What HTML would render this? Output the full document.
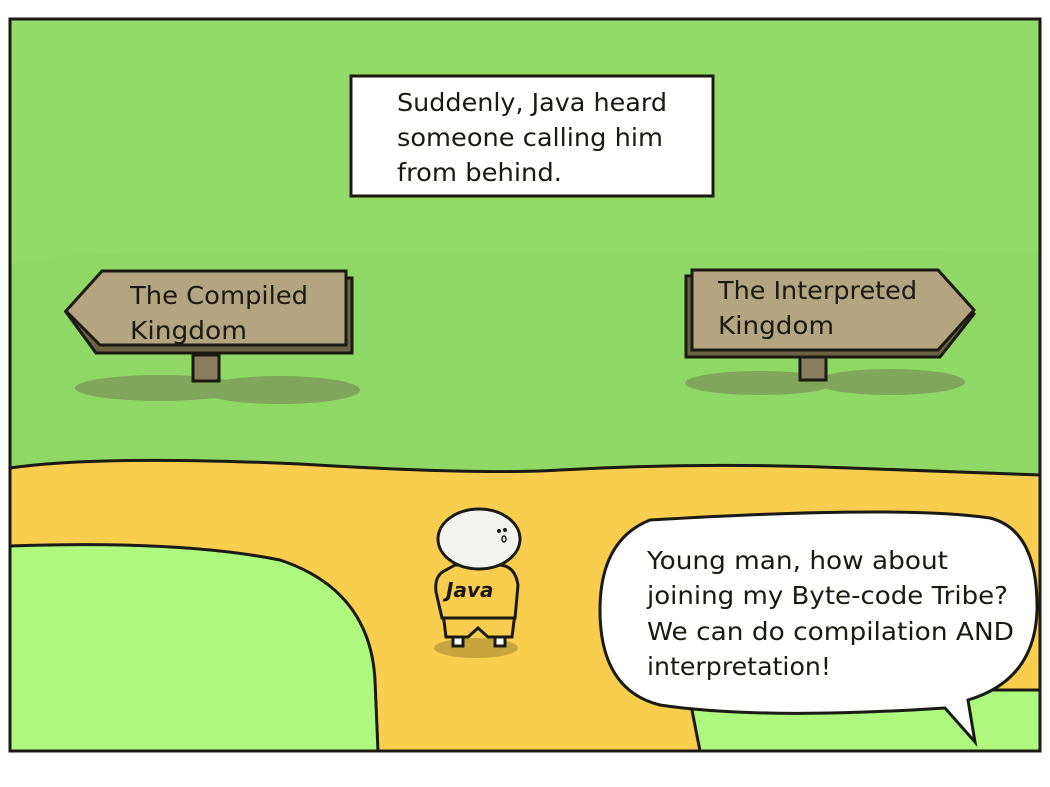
<!DOCTYPE html>
<html><head><meta charset="utf-8"><style>
html,body{margin:0;padding:0;background:#fff;width:1050px;height:787px;overflow:hidden}
svg{display:block}
text{font-family:"DejaVu Sans","Liberation Sans",sans-serif;fill:#1a1a12}
</style></head><body>
<svg width="1050" height="787" viewBox="0 0 1050 787">
<rect x="10" y="19" width="1030" height="732" fill="#94da68"/>
<path d="M10 265 Q60 250 200 252 L1040 250 L1040 480 L10 480Z" fill="#90d866"/>
<path d="M10 468 Q100 455 300 464 Q480 475 560 470 Q700 462 850 468 Q960 472 1040 475 L1040 751 L10 751Z" fill="#f9ce4f" stroke="#1a1a12" stroke-width="3"/>
<path d="M10 546 Q180 540 280 560 Q370 590 375 680 L378 751 L10 751Z" fill="#aef87f" stroke="#1a1a12" stroke-width="3"/>
<path d="M690 700 Q740 690 850 690 L1040 690 L1040 751 L700 751Z" fill="#aef87f" stroke="#1a1a12" stroke-width="3"/>
<rect x="10" y="19" width="1030" height="732" fill="none" stroke="#1a1a12" stroke-width="3"/>
<rect x="351" y="76" width="362" height="120" fill="#fff" stroke="#1a1a12" stroke-width="3"/>
<text x="397" y="111" font-size="25" textLength="270" lengthAdjust="spacingAndGlyphs">Suddenly, Java heard</text>
<text x="397" y="146" font-size="25" textLength="266" lengthAdjust="spacingAndGlyphs">someone calling him</text>
<text x="397" y="181" font-size="25" textLength="165" lengthAdjust="spacingAndGlyphs">from behind.</text>
<ellipse cx="160" cy="388" rx="85" ry="13" fill="#7fa65a"/>
<ellipse cx="280" cy="390" rx="80" ry="14" fill="#7fa65a"/>
<rect x="193" y="355" width="26" height="26" fill="#8a7d60" stroke="#1a1a12" stroke-width="3"/>
<path d="M66 312 L96 353 L352 353 L352 278 L100 276Z" fill="#6e6245" stroke="#1a1a12" stroke-width="3"/>
<path d="M66 311 L102 271 L346 271 L346 345 L100 345Z" fill="#b4a47f" stroke="#1a1a12" stroke-width="3"/>
<text x="130" y="304" font-size="25" textLength="178" lengthAdjust="spacingAndGlyphs">The Compiled</text>
<text x="130" y="339" font-size="25" textLength="117" lengthAdjust="spacingAndGlyphs">Kingdom</text>
<ellipse cx="760" cy="383" rx="75" ry="12" fill="#7fa65a"/>
<ellipse cx="890" cy="382" rx="75" ry="13" fill="#7fa65a"/>
<rect x="800" y="352" width="26" height="28" fill="#8a7d60" stroke="#1a1a12" stroke-width="3"/>
<path d="M686 276 L686 357 L940 357 L974 314 L936 276Z" fill="#6e6245" stroke="#1a1a12" stroke-width="3"/>
<path d="M692 270 L692 350 L938 350 L974 310 L938 270Z" fill="#b4a47f" stroke="#1a1a12" stroke-width="3"/>
<text x="718" y="299" font-size="25" textLength="199" lengthAdjust="spacingAndGlyphs">The Interpreted</text>
<text x="718" y="334" font-size="25" textLength="116" lengthAdjust="spacingAndGlyphs">Kingdom</text>
<ellipse cx="476" cy="648" rx="42" ry="10" fill="#c8a53c"/>
<rect x="453" y="624" width="10" height="22" fill="#fff" stroke="#1a1a12" stroke-width="3"/>
<rect x="495" y="624" width="10" height="22" fill="#fff" stroke="#1a1a12" stroke-width="3"/>
<path d="M443 613 L446 637 L468 637 L478 628 L488 637 L512 637 L515 613Z" fill="#f9ce4f" stroke="#1a1a12" stroke-width="3"/>
<path d="M446 570 Q434 575 436 592 L442 618 L515 618 L518 585 Q515 566 500 565 L455 565Z" fill="#f9ce4f" stroke="#1a1a12" stroke-width="3"/>
<text x="446" y="597" font-size="20" font-weight="bold" font-style="italic" font-family="Liberation Serif,serif">Java</text>
<ellipse cx="479" cy="539" rx="41" ry="30" fill="#f2f2ee" stroke="#1a1a12" stroke-width="3"/>
<circle cx="499" cy="531" r="2" fill="#1a1a12"/><circle cx="505" cy="530" r="2" fill="#1a1a12"/>
<ellipse cx="504" cy="539" rx="2" ry="3" fill="none" stroke="#1a1a12" stroke-width="1.5"/>
<path d="M650 520 Q600 540 600 610 Q600 690 660 705 Q760 720 945 708 L975 742 L968 700 Q1035 680 1037 610 Q1038 530 990 518 Q900 505 650 520Z" fill="#fff" stroke="#1a1a12" stroke-width="3"/>
<text x="647" y="569" font-size="25" textLength="301" lengthAdjust="spacingAndGlyphs">Young man, how about</text>
<text x="647" y="604" font-size="25" textLength="361" lengthAdjust="spacingAndGlyphs">joining my Byte-code Tribe?</text>
<text x="647" y="640" font-size="25" textLength="367" lengthAdjust="spacingAndGlyphs">We can do compilation AND</text>
<text x="647" y="675" font-size="25" textLength="184" lengthAdjust="spacingAndGlyphs">interpretation!</text>
</svg>
</body></html>
